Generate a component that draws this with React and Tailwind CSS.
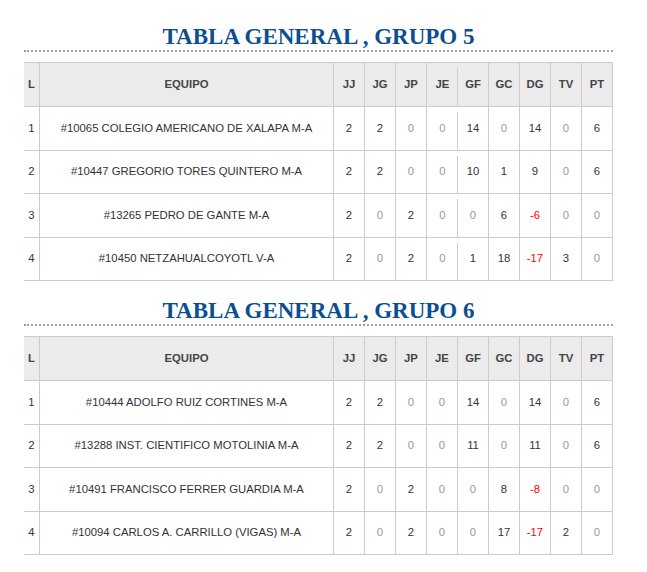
import React from "react";

const groups = [
  {
    title: "TABLA GENERAL , GRUPO 5",
    quirk: true,
    rows: [
      ["1", "#10065 COLEGIO AMERICANO DE XALAPA M-A", 2, 2, 0, 0, 14, 0, 14, 0, 6],
      ["2", "#10447 GREGORIO TORES QUINTERO M-A", 2, 2, 0, 0, 10, 1, 9, 0, 6],
      ["3", "#13265 PEDRO DE GANTE M-A", 2, 0, 2, 0, 0, 6, -6, 0, 0],
      ["4", "#10450 NETZAHUALCOYOTL V-A", 2, 0, 2, 0, 1, 18, -17, 3, 0],
    ],
  },
  {
    title: "TABLA GENERAL , GRUPO 6",
    quirk: false,
    rows: [
      ["1", "#10444 ADOLFO RUIZ CORTINES M-A", 2, 2, 0, 0, 14, 0, 14, 0, 6],
      ["2", "#13288 INST. CIENTIFICO MOTOLINIA M-A", 2, 2, 0, 0, 11, 0, 11, 0, 6],
      ["3", "#10491 FRANCISCO FERRER GUARDIA M-A", 2, 0, 2, 0, 0, 8, -8, 0, 0],
      ["4", "#10094 CARLOS A. CARRILLO (VIGAS) M-A", 2, 0, 2, 0, 0, 17, -17, 2, 0],
    ],
  },
];

const heads = ["JJ", "JG", "JP", "JE", "GF", "GC", "DG", "TV", "PT"];

function NumCell({ children, className = "", quirk }) {
  const base =
    "w-[31px] shrink-0 flex items-center justify-center " +
    (quirk
      ? "bg-[linear-gradient(#cccccc,#cccccc)] bg-no-repeat bg-[length:1px_100%] bg-[position:100%_5px] "
      : "border-r border-[#cccccc] ");
  return <div className={base + className}>{children}</div>;
}

function Table({ group }) {
  return (
    <div className="border-t border-[#cccccc]">
      <div className="flex h-[44px] bg-[#ebebeb] border-b border-[#cccccc] font-bold text-[#444444]">
        <div className="w-[16px] shrink-0 border-r border-[#cccccc] flex items-center justify-center">L</div>
        <div className="w-[294px] shrink-0 border-r border-[#cccccc] flex items-center justify-center">EQUIPO</div>
        {heads.map((h, i) => (
          <NumCell key={h} quirk={group.quirk && i === 3}>
            {h}
          </NumCell>
        ))}
      </div>
      {group.rows.map((r) => (
        <div key={r[0]} className="flex h-[43.5px] border-b border-[#cccccc] text-[#333333]">
          <div className="w-[16px] shrink-0 border-r border-[#cccccc] flex items-center justify-center">{r[0]}</div>
          <div className="w-[294px] shrink-0 border-r border-[#cccccc] flex items-center justify-center">{r[1]}</div>
          {r.slice(2).map((v, i) => (
            <NumCell
              key={i}
              quirk={group.quirk && i === 3}
              className={v < 0 ? "text-[#ff0000]" : v === 0 ? "text-[#999999]" : "text-[#333333]"}
            >
              {v}
            </NumCell>
          ))}
        </div>
      ))}
    </div>
  );
}

export default function App() {
  return (
    <div className="w-[647px] min-h-[572px] bg-white font-['Liberation_Sans',Arial,sans-serif] text-[11.3px]">
      <div className="ml-[24px] w-[589px] pt-[24px]">
        {groups.map((g, idx) => (
          <div key={g.title} className={idx > 0 ? "mt-[17px]" : ""}>
            <h2 className="text-center font-['Liberation_Serif','Times_New_Roman',serif] font-bold text-[23px] leading-[26px] text-[#0b4f92] border-b-2 border-dotted border-[#a0a0a0]">
              {g.title}
            </h2>
            <div className="mt-[10px]">
              <Table group={g} />
            </div>
          </div>
        ))}
      </div>
    </div>
  );
}
